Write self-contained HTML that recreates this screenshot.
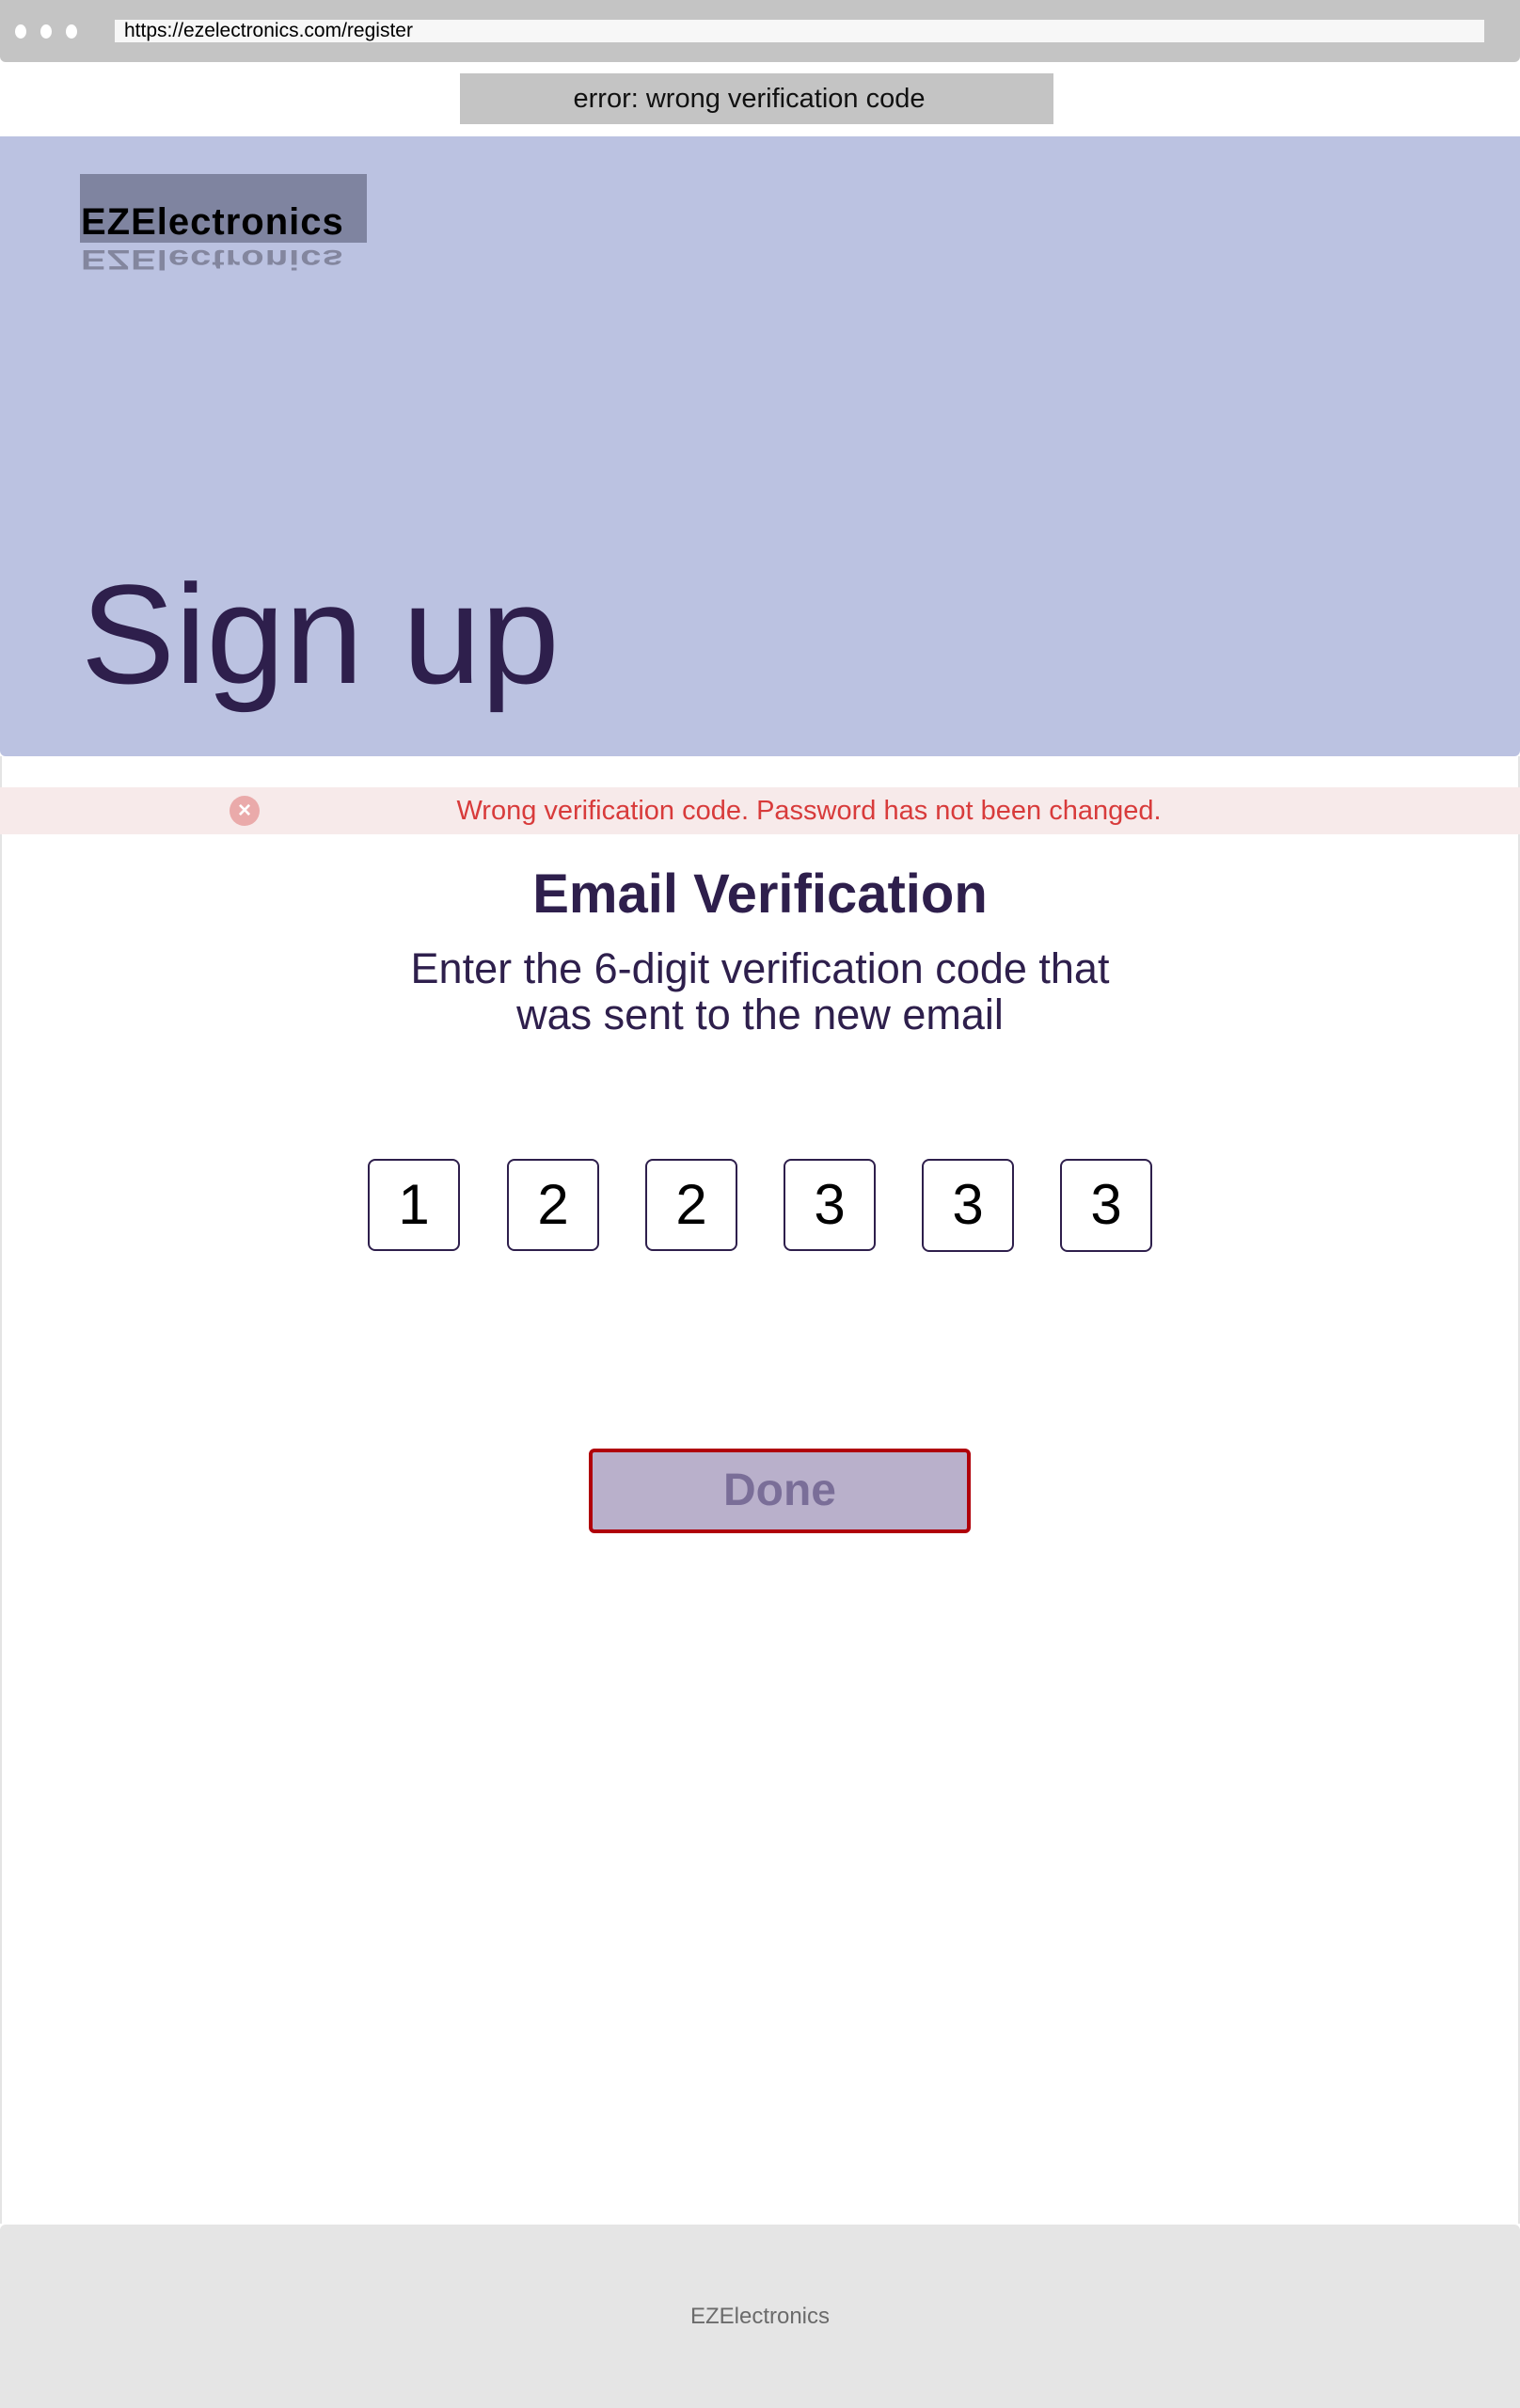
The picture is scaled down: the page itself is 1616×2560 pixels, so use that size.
<!DOCTYPE html>
<html><head><meta charset="utf-8"><style>
*{margin:0;padding:0;box-sizing:border-box}
body{width:1616px;height:2560px;background:#fff;font-family:"Liberation Sans","DejaVu Sans",sans-serif;position:relative;overflow:hidden}
.abs{position:absolute}
</style></head><body>
<div class="abs" style="left:0;top:0;width:1616px;height:66px;background:#c4c4c4;border-radius:0 0 6px 6px"></div>
<div class="abs" style="left:16px;top:26px;width:12px;height:15px;border-radius:50%;background:#fff"></div>
<div class="abs" style="left:43px;top:26px;width:12px;height:15px;border-radius:50%;background:#fff"></div>
<div class="abs" style="left:70px;top:26px;width:12px;height:15px;border-radius:50%;background:#fff"></div>
<div class="abs" style="left:122px;top:21px;width:1456px;height:24px;background:#f7f7f7;font-size:21px;line-height:24px;padding-left:10px;color:#000">https://ezelectronics.com/register</div>
<div class="abs" style="left:489px;top:78px;width:631px;height:54px;background:#c4c4c4;font-size:29px;line-height:54px;text-align:center;color:#111;padding-right:16px">error: wrong verification code</div>
<div class="abs" style="left:0;top:145px;width:1616px;height:659px;background:#bbc2e1;border-radius:0 0 6px 6px"></div>
<div class="abs" style="left:85px;top:185px;width:305px;height:73px;background:#7f84a0"></div>
<div class="abs" style="left:86px;top:214px;font-size:40px;font-weight:bold;color:#000;letter-spacing:1px;line-height:44px">EZElectronics</div>
<div class="abs" style="left:86px;top:258px;font-size:40px;font-weight:bold;color:#83869e;letter-spacing:1px;line-height:44px;transform:scaleY(-0.75);transform-origin:top;margin-top:34px">EZElectronics</div>
<div class="abs" style="left:86px;top:584px;font-size:150px;color:#2e1f4c;line-height:180px">Sign up</div>
<div class="abs" style="left:0;top:804px;width:2px;height:1560px;background:#e4e4e4"></div>
<div class="abs" style="right:0;top:804px;width:2px;height:1560px;background:#e4e4e4"></div>
<div class="abs" style="left:0;top:837px;width:1616px;height:50px;background:#f7eaea"></div>
<div class="abs" style="left:244px;top:846px;width:32px;height:32px;border-radius:50%;background:#eaaaaa;color:#fff;font-size:24px;line-height:32px;text-align:center;font-weight:bold">×</div>
<div class="abs" style="left:0;top:837px;width:1616px;height:50px;text-align:center;font-size:29px;line-height:50px;color:#d83b3b;padding-left:104px">Wrong verification code. Password has not been changed.</div>
<div class="abs" style="left:0;top:916px;width:1616px;text-align:center;font-size:58px;font-weight:bold;color:#2e1f4c;line-height:70px">Email Verification</div>
<div class="abs" style="left:0;top:1005px;width:1616px;text-align:center;font-size:45px;color:#2e1f4c;line-height:49px">Enter the 6-digit verification code that<br>was sent to the new email</div>
<div class="abs" style="left:391px;top:1232px;width:98px;height:98px;border:2px solid #2e1f4c;border-radius:8px;font-size:60px;line-height:94px;text-align:center">1</div>
<div class="abs" style="left:539px;top:1232px;width:98px;height:98px;border:2px solid #2e1f4c;border-radius:8px;font-size:60px;line-height:94px;text-align:center">2</div>
<div class="abs" style="left:686px;top:1232px;width:98px;height:98px;border:2px solid #2e1f4c;border-radius:8px;font-size:60px;line-height:94px;text-align:center">2</div>
<div class="abs" style="left:833px;top:1232px;width:98px;height:98px;border:2px solid #2e1f4c;border-radius:8px;font-size:60px;line-height:94px;text-align:center">3</div>
<div class="abs" style="left:980px;top:1232px;width:98px;height:99px;border:2px solid #2e1f4c;border-radius:8px;font-size:60px;line-height:94px;text-align:center">3</div>
<div class="abs" style="left:1127px;top:1232px;width:98px;height:99px;border:2px solid #2e1f4c;border-radius:8px;font-size:60px;line-height:94px;text-align:center">3</div>
<div class="abs" style="left:626px;top:1540px;width:406px;height:90px;background:#b9b0cb;border:4px solid #b0000a;border-radius:6px;font-size:48px;font-weight:bold;color:#7a6e98;text-align:center;line-height:82px">Done</div>
<div class="abs" style="left:0;top:2365px;width:1616px;height:195px;background:#e5e5e5;border-radius:6px 6px 0 0"></div>
<div class="abs" style="left:0;top:2447px;width:1616px;text-align:center;font-size:24px;color:#6b6b6b;line-height:32px">EZElectronics</div>
</body></html>
